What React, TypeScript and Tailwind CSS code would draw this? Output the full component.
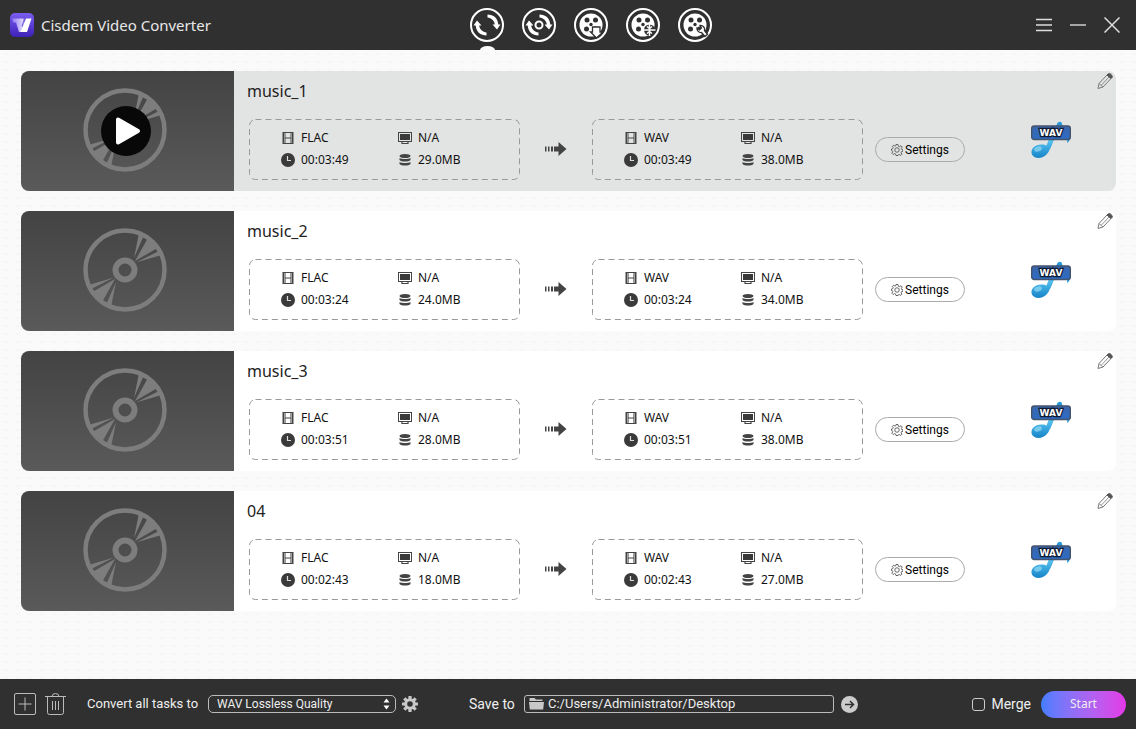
import { useState } from 'react'
import type { ReactNode } from 'react'

type Task = {
  id: number
  name: string
  duration: string
  sourceSize: string
  targetSize: string
}

const tasks: Task[] = [
  { id: 1, name: 'music_1', duration: '00:03:49', sourceSize: '29.0MB', targetSize: '38.0MB' },
  { id: 2, name: 'music_2', duration: '00:03:24', sourceSize: '24.0MB', targetSize: '34.0MB' },
  { id: 3, name: 'music_3', duration: '00:03:51', sourceSize: '28.0MB', targetSize: '38.0MB' },
  { id: 4, name: '04', duration: '00:02:43', sourceSize: '18.0MB', targetSize: '27.0MB' },
]

function LogoIcon() {
  return (
    <svg width="24" height="24" viewBox="0 0 24 24" aria-hidden="true">
      <defs>
        <linearGradient id="logo-bg" x1="0" y1="0" x2="0" y2="1">
          <stop offset="0" stopColor="#7a5cf0" />
          <stop offset="1" stopColor="#3d22b8" />
        </linearGradient>
        <linearGradient id="logo-v" x1="0" y1="0" x2="1" y2="0">
          <stop offset="0" stopColor="#8f78f5" />
          <stop offset="1" stopColor="#efeaff" />
        </linearGradient>
      </defs>
      <rect width="24" height="24" rx="5" fill="url(#logo-bg)" />
      <path d="M2 5.500h11.500l1.500 7-4 6.500H9L6 9.500H3.500z" fill="url(#logo-v)" />
      <path d="M16 5.500h5.500L17 19h-6.500z" fill="#fff" />
      <path d="M14 5.500h1.200l-2.700 9-.8-2z" fill="#7a63e4" />
    </svg>
  )
}

function Ring({ children }: { children: ReactNode }) {
  return (
    <svg width="34" height="34" viewBox="0 0 34 34" fill="none" aria-hidden="true">
      <circle cx="17" cy="17" r="16" stroke="#fff" strokeWidth="2" />
      {children}
    </svg>
  )
}

function Arrows() {
  return (
    <g fill="#fff">
      <path d="M17.500 6.500C23.500 6.500 27.800 10 28.300 16.500H30.500L27 21.500 22.500 16.500H24.800C24.300 12.500 21.500 10 17.500 9.500z" />
      <path d="M16.500 27.500C10.500 27.500 6.200 24 5.700 17.500H3.500L7 12.500 11.500 17.500H9.200C9.700 21.500 12.500 24 16.500 24.500z" />
    </g>
  )
}

function Reel() {
  return (
    <>
      <circle cx="17" cy="17" r="11.500" fill="#fff" />
      <g fill="#303030">
        <circle cx="13" cy="12" r="2.500" />
        <circle cx="21.500" cy="12" r="2.500" />
        <circle cx="12.500" cy="21" r="2.500" />
        <circle cx="21.500" cy="21" r="2.500" />
        <circle cx="17" cy="16.500" r="1.700" />
      </g>
    </>
  )
}

const modes = [
  { label: 'Convert', icon: <Arrows /> },
  {
    label: 'Rip',
    icon: (
      <>
        <Arrows />
        <circle cx="17" cy="17" r="6" fill="#303030" />
        <circle cx="17" cy="17" r="3.500" stroke="#fff" strokeWidth="2" />
      </>
    ),
  },
  {
    label: 'Download',
    icon: (
      <>
        <Reel />
        <path d="M18.500 19h7.500v5h3l-6.500 6-6-6h2z" fill="#fff" stroke="#303030" strokeWidth="1.300" />
      </>
    ),
  },
  {
    label: 'Compress',
    icon: (
      <>
        <Reel />
        <circle cx="23.500" cy="22" r="5.500" fill="#303030" />
        <path d="M23.500 16v12M17.500 22h12M21 18.500l2.500 2 2.500-2M21 25.500l2.500-2 2.500 2" stroke="#fff" strokeWidth="1.500" />
      </>
    ),
  },
  {
    label: 'Edit',
    icon: (
      <>
        <Reel />
        <path d="M22 17.500a4 4 0 0 1 4.500 5l3 4-2.500 2-3.500-4a4 4 0 0 1-4.500-4.500l2.500 2 2-2z" fill="#fff" stroke="#303030" strokeWidth="1.300" />
      </>
    ),
  },
]

function DiscIcon() {
  return (
    <svg width="84" height="84" viewBox="0 0 84 84" fill="none" aria-hidden="true">
      <circle cx="42" cy="42" r="39.500" stroke="#7d7d7d" strokeWidth="4.500" />
      <circle cx="42" cy="42" r="9.500" stroke="#7d7d7d" strokeWidth="6" />
      <g fill="#7d7d7d">
        <path d="M51 30L56 5l5 2zM52 33L65.500 9l9 11zM53 34.500L76 23l2.500 4z" />
        <path d="M33 54L28 79l-5-2zM32 51L18.500 75 9.500 64zM31 49.500L8 61l-2.500-4z" />
      </g>
    </svg>
  )
}

function PlayIcon() {
  return (
    <svg width="50" height="50" viewBox="0 0 50 50" aria-hidden="true">
      <circle cx="25" cy="25" r="25" fill="#080808" />
      <path d="M17 13.500v23L37 25z" fill="#fff" stroke="#fff" strokeWidth="4" strokeLinejoin="round" />
    </svg>
  )
}

function FilmIcon() {
  return (
    <svg width="14" height="14" viewBox="0 0 14 14" fill="none" stroke="#444" aria-hidden="true">
      <path d="M2.500 1v12M11.500 1v12" strokeWidth="2" />
      <path d="M4.500 1v12M9.500 1v12" stroke="#999" />
      <path d="M2 1.500h10M4 7h6M2 12.500h10" />
    </svg>
  )
}

function ClockIcon() {
  return (
    <svg width="14" height="14" viewBox="0 0 14 14" fill="none" aria-hidden="true">
      <circle cx="7" cy="7" r="7" fill="#3a3a3a" />
      <path d="M6.500 3v4.500H10" stroke="#ddd" strokeWidth="1.200" />
    </svg>
  )
}

function MonitorIcon() {
  return (
    <svg width="14" height="14" viewBox="0 0 14 14" fill="none" aria-hidden="true">
      <rect x=".5" y="1.500" width="13" height="9" stroke="#444" />
      <rect x="2" y="3" width="10" height="6" fill="#3a3a3a" />
      <path d="M4 10.500v2h6v-2" stroke="#444" strokeWidth="1.200" />
    </svg>
  )
}

function DatabaseIcon() {
  return (
    <svg width="14" height="14" viewBox="0 0 14 14" fill="#444" aria-hidden="true">
      <ellipse cx="7" cy="3" rx="5.500" ry="2" />
      <path d="M1.500 5c2 1.300 9 1.300 11 0v2c-2 2-9 2-11 0zM1.500 9c2 1.300 9 1.300 11 0v2c-2 2-9 2-11 0z" />
    </svg>
  )
}

function ArrowIcon() {
  return (
    <svg width="22" height="16" viewBox="0 0 22 16" fill="#444" className="shrink-0" aria-hidden="true">
      <path d="M0 4.500h1.500v5H0zM3 4.500h1.500v5H3zM6 4.500h2v5H6zM9 4.500h4.500V0l8 7-8 7V9.500H9z" />
    </svg>
  )
}

function GearOutlineIcon() {
  return (
    <svg width="12" height="12" viewBox="0 0 24 24" fill="none" stroke="#555" strokeWidth="1.800" aria-hidden="true">
      <path d="M10 1h4l.8 3.500 2 .8L20 3.500l2.500 2.500-1.800 3 .8 2 2.500.5v3l-3 .8-.8 2 1.800 3-2.500 2.500-3-1.800-2 .8L14 23h-4l-.8-3-2-.8-3 1.800-2.500-2.500 1.800-3-.8-2L1 13v-3l2.500-.8.8-2L2.500 5 5 2.500l3 1.800 1.500-.8z" />
      <circle cx="12" cy="12" r="4.500" />
    </svg>
  )
}

function GearIcon() {
  return (
    <svg width="16" height="16" viewBox="0 0 16 16" aria-hidden="true">
      <g stroke="#c8c8c8" strokeWidth="3.200">
        <path d="M8 0v16M0 8h16M2.300 2.300l11.400 11.400M13.700 2.300L2.300 13.700" />
      </g>
      <circle cx="8" cy="8" r="5.800" fill="#c8c8c8" />
      <circle cx="8" cy="8" r="2.800" fill="#303030" />
    </svg>
  )
}

function PencilIcon() {
  return (
    <svg width="16" height="17" viewBox="0 0 16 17" fill="none" stroke="#777" aria-hidden="true">
      <path d="M1 15.500l1-5L10 2l4 3.500L6 14z" />
      <path d="M10 2l1.500-1.300h1.800L15.200 3v1.200L14 5.500z" fill="#555" stroke="#555" />
      <path d="M4 12.500L12 4M2 10.500l4 3.500" strokeWidth=".8" />
    </svg>
  )
}

function WavIcon() {
  return (
    <svg width="40" height="38" viewBox="0 0 40 38" role="img" aria-label="WAV format">
      <defs>
        <linearGradient id="note" x1="0" y1="0" x2="0" y2="1">
          <stop offset="0" stopColor="#5cc8f2" />
          <stop offset="1" stopColor="#1583c8" />
        </linearGradient>
        <linearGradient id="plate" x1="0" y1="0" x2="0" y2="1">
          <stop offset="0" stopColor="#3b66ad" />
          <stop offset="1" stopColor="#2c6cc4" />
        </linearGradient>
      </defs>
      <path d="M26 3c1-3 5-3 5 0 1 4 8 7 8 13 0 3-1 5-3 6 1-5-1-6-6-6h-6l-5 12h-3.500z" fill="#2498d8" />
      <path d="M18 18h5l-5 12c-2 4-6 7-10.500 7S0 34 .5 30.500C1 26 6 23 11 23.500c2 0 3.500.6 4.500 1z" fill="url(#note)" />
      <ellipse cx="7" cy="28" rx="4" ry="2.500" fill="#a3e2fa" opacity=".6" transform="rotate(-20 7 28)" />
      <rect x=".7" y="5" width="38.600" height="13.500" rx="2.500" fill="url(#plate)" stroke="#44536c" strokeWidth="1.400" />
      <text
        x="20"
        y="15"
        textAnchor="middle"
        fill="#fff"
        stroke="#101c33"
        strokeWidth="2.500"
        paintOrder="stroke"
        className="font-['DejaVu_Sans',sans-serif] text-[9px] font-bold"
      >
        WAV
      </text>
    </svg>
  )
}

function MediaInfo({ format, duration, size }: { format: string; duration: string; size: string }) {
  const items = [
    { icon: <FilmIcon />, text: format },
    { icon: <MonitorIcon />, text: 'N/A' },
    { icon: <ClockIcon />, text: duration },
    { icon: <DatabaseIcon />, text: size },
  ]

  return (
    <div className="relative w-[271px] shrink-0 pt-2 pb-[9px] pl-8">
      {/* Dashed frame */}
      <svg className="absolute inset-0 h-full w-full" fill="none" aria-hidden="true">
        <rect x=".5" y=".5" width="270" height="60" rx="6" stroke="#999" strokeDasharray="6 4" />
      </svg>
      <div className="grid grid-cols-[117px_1fr] text-xs leading-[22px] text-[#111]">
        {items.map((item, i) => (
          <div key={i} className="flex items-center gap-[6px]">
            {item.icon}
            <span>{item.text}</span>
          </div>
        ))}
      </div>
    </div>
  )
}

function TaskCard({ task, selected, onSelect }: { task: Task; selected: boolean; onSelect: () => void }) {
  return (
    <li
      onClick={onSelect}
      className={`flex h-[120px] overflow-hidden rounded-lg ${selected ? 'bg-[#e2e4e3]' : 'bg-white'}`}
    >
      <div className="relative flex w-[213px] shrink-0 items-center justify-center bg-linear-to-b from-[#434344] to-[#5a5a5b] pr-[5px] pb-[2px]">
        <DiscIcon />
        {selected && (
          <button aria-label={`Play ${task.name}`} className="absolute top-[35px] left-[80px]">
            <PlayIcon />
          </button>
        )}
      </div>

      <div className="min-w-0 flex-1 pl-[13px]">
        <div className="flex items-start justify-between pr-[3px]">
          <h2 className="text-base leading-10 text-[#222]">{task.name}</h2>
          <button aria-label={`Rename ${task.name}`} className="mt-[2px]">
            <PencilIcon />
          </button>
        </div>

        <div className="mt-2 ml-[2px] flex items-center">
          <MediaInfo format="FLAC" duration={task.duration} size={task.sourceSize} />
          <div className="mx-[25px] flex shrink-0">
            <ArrowIcon />
          </div>
          <MediaInfo format="WAV" duration={task.duration} size={task.targetSize} />
          <button className="ml-3 flex h-[25px] w-[90px] shrink-0 items-center justify-center gap-[2px] rounded-full border border-[#aaa] font-[Roboto,sans-serif] text-xs text-black">
            <GearOutlineIcon />
            Settings
          </button>
          <div className="mr-[45px] ml-auto shrink-0 self-start pt-[2px]">
            <WavIcon />
          </div>
        </div>
      </div>
    </li>
  )
}

function Header() {
  const [mode, setMode] = useState('Convert')

  return (
    <header className="flex h-[50px] shrink-0 items-center bg-[#303030] text-[#e8e8e8]">
      <div className="flex flex-1 items-center gap-[7px] pl-[10px]">
        <LogoIcon />
        <h1 className="text-[15px] leading-6 whitespace-nowrap">Cisdem Video Converter</h1>
      </div>
      <nav className="ml-[52px] flex h-full items-center gap-[18px]">
        {modes.map((m) => (
          <button
            key={m.label}
            aria-label={m.label}
            onClick={() => setMode(m.label)}
            className="relative flex h-full items-center"
          >
            <Ring>{m.icon}</Ring>
            {mode === m.label && (
              <span className="absolute bottom-0 left-[10px] h-1 w-[15px] rounded-[50%_50%_0_0/100%_100%_0_0] bg-[#fafafa]" />
            )}
          </button>
        ))}
      </nav>
      <div className="flex flex-1 items-center justify-end gap-[18px] pr-4">
        <button aria-label="Menu">
          <svg width="16" height="16" viewBox="0 0 16 16" stroke="#ddd" strokeWidth="1.500" aria-hidden="true">
            <path d="M0 2.500h16M0 8h16M0 13.500h16" />
          </svg>
        </button>
        <button aria-label="Minimize">
          <svg width="16" height="16" viewBox="0 0 16 16" stroke="#ccc" strokeWidth="1.500" aria-hidden="true">
            <path d="M0 8h16" />
          </svg>
        </button>
        <button aria-label="Close">
          <svg width="16" height="16" viewBox="0 0 16 16" stroke="#ddd" strokeWidth="1.500" aria-hidden="true">
            <path d="M.5.5l15 15M15.500.5l-15 15" />
          </svg>
        </button>
      </div>
    </header>
  )
}

function Footer() {
  return (
    <footer className="flex h-[50px] shrink-0 items-center bg-[#303030] pr-[10px] pl-[14px] font-[Roboto,sans-serif] text-sm text-[#eee]">
      <button aria-label="Add files">
        <svg width="22" height="22" viewBox="0 0 22 22" fill="none" stroke="#bbb" aria-hidden="true">
          <rect x=".5" y=".5" width="21" height="21" rx="1.500" />
          <path d="M11 4.500v13M4.500 11h13" />
        </svg>
      </button>
      <button aria-label="Remove all" className="ml-[9px]">
        <svg width="21" height="22" viewBox="0 0 21 22" fill="none" stroke="#bbb" aria-hidden="true">
          <path d="M0 3.500h21M2.500 3.500v16q0 2 2 2h12q2 0 2-2v-16M7 3.500q0-3 3.500-3t3.500 3" />
          <path d="M7.500 8v9M10.500 8v9M13.500 8v9" />
        </svg>
      </button>

      <label htmlFor="preset" className="ml-[21px] w-[112px] text-[13px] whitespace-nowrap">
        Convert all tasks to
      </label>
      <div className="relative ml-[9px] flex">
        <select
          id="preset"
          className="h-[18px] w-[188px] appearance-none rounded-[5px] border border-[#bbb] bg-transparent pl-2 text-xs leading-4 text-[#eee]"
        >
          <option>WAV Lossless Quality</option>
        </select>
        <svg width="7" height="12" viewBox="0 0 7 12" fill="#fff" className="pointer-events-none absolute top-[3px] right-[6px]" aria-hidden="true">
          <path d="M.5 4.500h6l-3-4zM.5 7.500h6l-3 4z" />
        </svg>
      </div>
      <button aria-label="Preset settings" className="ml-[6px]">
        <GearIcon />
      </button>

      <label htmlFor="folder" className="ml-[51px] w-[46px] whitespace-nowrap">
        Save to
      </label>
      <div className="ml-[9px] flex h-[18px] w-[310px] items-center gap-1 rounded-[3px] border border-[#bbb] pl-1">
        <svg width="15" height="12" viewBox="0 0 15 12" fill="#c8c8c8" className="shrink-0" aria-hidden="true">
          <path d="M1 0h4.500l1.500 1.500h6.500V3H.5V.5zM0 4h15l-.8 7.500H.8z" />
        </svg>
        <input
          id="folder"
          type="text"
          defaultValue="C:/Users/Administrator/Desktop"
          className="h-4 w-full min-w-0 bg-transparent text-[13px] outline-none"
        />
      </div>
      <button aria-label="Open folder" className="ml-[7px]">
        <svg width="17" height="17" viewBox="0 0 17 17" fill="none" aria-hidden="true">
          <circle cx="8.500" cy="8.500" r="8.500" fill="#ccc" />
          <path d="M4 8.500h8.500M9 5l3.500 3.500L9 12" stroke="#303030" strokeWidth="1.500" />
        </svg>
      </button>

      <label className="ml-auto flex items-center gap-[6px]">
        <input type="checkbox" className="size-[13px] appearance-none rounded-[3px] border border-[#ccc] checked:bg-[#ccc]" />
        Merge
      </label>
      <button className="ml-[10px] h-[27px] w-[85px] rounded-full bg-linear-to-r from-[#427dff] to-[#e436e6] font-['Noto_Sans',sans-serif] text-xs">
        Start
      </button>
    </footer>
  )
}

export default function App() {
  const [selectedId, setSelectedId] = useState(1)

  return (
    <div className="flex min-h-screen flex-col font-['Noto_Sans',sans-serif]">
      <Header />
      <main className="flex-1 bg-[#fafafa] bg-[radial-gradient(ellipse_4px_1px,#f6f6f6_60%,transparent)] bg-size-[12px_8px] pt-[21px] pr-5 pl-[21px]">
        <ul className="space-y-5">
          {tasks.map((task) => (
            <TaskCard key={task.id} task={task} selected={task.id === selectedId} onSelect={() => setSelectedId(task.id)} />
          ))}
        </ul>
      </main>
      <Footer />
    </div>
  )
}
